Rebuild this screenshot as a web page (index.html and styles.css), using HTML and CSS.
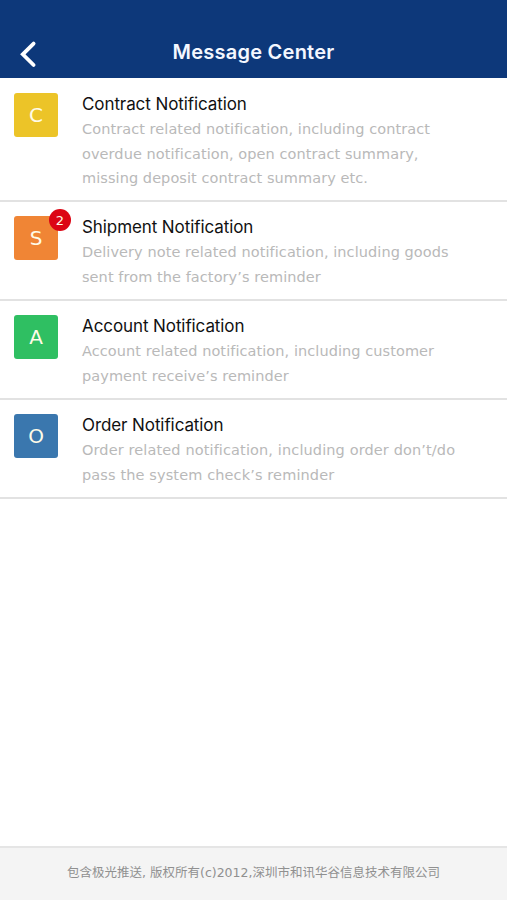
FILE: index.html
```html
<!DOCTYPE html>
<html lang="en">
<head>
<meta charset="utf-8">
<title>Message Center</title>
<link rel="stylesheet" href="styles.css">
</head>
<body>
<div class="app">
<header class="header">
<svg class="back" width="20" height="28" viewBox="0 0 20 28"><path d="M15.6 3.6 L4.8 14.3 L15.6 25" fill="none" stroke="#fff" stroke-width="3.8" stroke-linecap="round"/></svg>
<h1 class="title">Message Center</h1>
</header>
<main class="list">
<section class="item"><div class="icon yellow">C</div><div class="content"><h2 class="name">Contract Notification</h2><p class="desc"><span class="line">Contract related notification, including contract</span><span class="line">overdue notification, open contract summary,</span><span class="line">missing deposit contract summary etc.</span></p></div></section>
<section class="item"><div class="icon orange">S<span class="badge">2</span></div><div class="content"><h2 class="name">Shipment Notification</h2><p class="desc"><span class="line">Delivery note related notification, including goods</span><span class="line">sent from the factory’s reminder</span></p></div></section>
<section class="item"><div class="icon green">A</div><div class="content"><h2 class="name">Account Notification</h2><p class="desc"><span class="line">Account related notification, including customer</span><span class="line">payment receive’s reminder</span></p></div></section>
<section class="item"><div class="icon blue">O</div><div class="content"><h2 class="name">Order Notification</h2><p class="desc wide"><span class="line">Order related notification, including order don’t/do</span><span class="line">pass the system check’s reminder</span></p></div></section>
</main>
<footer class="footer">包含极光推送, 版权所有(c)2012,深圳市和讯华谷信息技术有限公司</footer>
</div>
</body>
</html>
```
FILE: styles.css
```css
* { box-sizing: border-box; }
body { margin: 0; background: #fff; font-family: "DejaVu Sans", sans-serif; }
.app { height: 900px; display: flex; flex-direction: column; }
.header { height: 78px; flex: none; background: #0d387a; display: grid; grid-template-columns: 60px 1fr 60px; padding-top: 26px; align-items: center; }
.back { margin: 3px 0 0 18px; }
.title { margin: 0; text-align: center; color: #f4f7ff; font: 600 20px/28px Inter, sans-serif; letter-spacing: 0.25px; }
.list { flex: 1; }
.item { display: flex; height: 99px; padding: 14px 14px 0; border-bottom: 2px solid #e2e2e2; }
.item:first-child { height: 124px; padding-top: 15px; }
.icon { position: relative; width: 44px; height: 44px; margin-right: 24px; border-radius: 3px; color: #fffbe8; font-size: 20px; line-height: 45px; text-align: center; flex: none; }
.yellow { background: #ecc428; }
.orange { background: #f08535; }
.green { background: #2fbf62; }
.blue { background: #3a77ae; }
.badge { position: absolute; top: -7px; right: -13px; width: 22px; height: 22px; border-radius: 50%; background: #dc0514; font-size: 13px; line-height: 23px; }
.content { margin-top: -1px; }
.name { margin: 0 0 1px; color: #111; font: 400 17px/24px Inter, sans-serif; letter-spacing: -0.09px; }
.desc { margin: 0; color: #b9b9b9; font-size: 14.5px; line-height: 24.5px; letter-spacing: 0.07px; }
.wide { letter-spacing: 0.12px; }
.line { display: block; white-space: nowrap; }
.footer { flex: none; height: 54px; border-top: 2px solid #e5e5e5; background: #f4f4f4; color: #909090; text-align: center; font: 12.5px/50px "DejaVu Sans", "Noto Sans CJK SC", sans-serif; }
```
